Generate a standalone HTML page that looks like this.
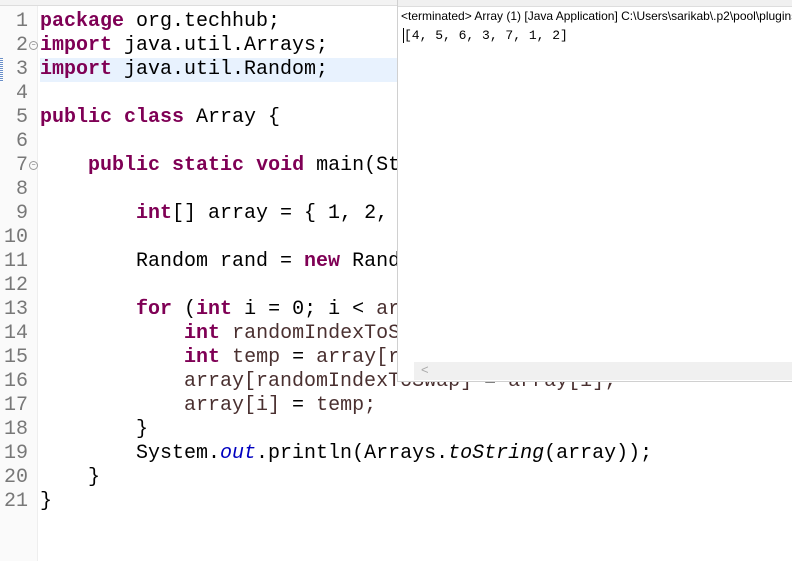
<!DOCTYPE html>
<html><head><meta charset="utf-8"><style>
body{margin:0;width:792px;height:561px;overflow:hidden;background:#fff;position:relative;font-family:"Liberation Mono",monospace}
.tabs{position:absolute;left:0;top:0;width:792px;height:5px;background:#f3f3f3;border-bottom:1px solid #ddd}
.gut{position:absolute;left:0;top:6px;width:37px;height:555px;background:#fafafa;border-right:1px solid #eee}
.hl{position:absolute;left:40px;top:58px;width:360px;height:24px;background:#e8f2fe}
.mk{position:absolute;left:0;top:58px;width:3px;height:24px;background:repeating-linear-gradient(#6a8fc8 0 1px,#fff 1px 2px)}
.ln{position:absolute;left:0;width:28px;text-align:right;color:#787878;font-size:20px;line-height:24px}
.cd{position:absolute;left:40px;width:752px;overflow:hidden;white-space:pre;font-size:20px;line-height:24px;color:#000}
.k{color:#7f0055;font-weight:bold}
.v{color:#4a3030}
.f{color:#0000c0;font-style:italic}
.i{font-style:italic}
.fold{position:absolute;left:29px;width:7px;height:7px;border:1px solid #999;border-radius:50%;font-size:7px;line-height:7px;text-align:center;color:#666;font-family:"Liberation Sans",sans-serif}
.con{position:absolute;left:397px;top:0;width:395px;height:381px;overflow:hidden;background:#fff;border-left:1px solid #d0d0d0;border-bottom:1px solid #d0d0d0}
.ctab{position:absolute;left:0;top:0;width:395px;height:6px;background:#f0f0f0;border-bottom:1px solid #ddd}
.chd{position:absolute;left:3px;top:9px;font-family:"Liberation Sans",sans-serif;font-size:12px;white-space:nowrap;color:#000}
.out{position:absolute;left:6px;top:28px;font-size:13px;white-space:pre;color:#000}
.cur{position:absolute;left:5px;top:28px;width:1px;height:15px;background:#000}
.sb{position:absolute;left:16px;top:362px;width:379px;height:18px;background:#f0f0f0}
.sb span{position:absolute;left:7px;top:0;font-size:13px;color:#aaa;font-family:"Liberation Sans",sans-serif}
</style></head><body>
<div class="tabs"></div>
<div class="gut"></div>
<div class="hl"></div>
<div class="mk"></div>
<div class="ln" style="top:10px">1</div>
<div class="ln" style="top:34px">2</div>
<div class="ln" style="top:58px">3</div>
<div class="ln" style="top:82px">4</div>
<div class="ln" style="top:106px">5</div>
<div class="ln" style="top:130px">6</div>
<div class="ln" style="top:154px">7</div>
<div class="ln" style="top:178px">8</div>
<div class="ln" style="top:202px">9</div>
<div class="ln" style="top:226px">10</div>
<div class="ln" style="top:250px">11</div>
<div class="ln" style="top:274px">12</div>
<div class="ln" style="top:298px">13</div>
<div class="ln" style="top:322px">14</div>
<div class="ln" style="top:346px">15</div>
<div class="ln" style="top:370px">16</div>
<div class="ln" style="top:394px">17</div>
<div class="ln" style="top:418px">18</div>
<div class="ln" style="top:442px">19</div>
<div class="ln" style="top:466px">20</div>
<div class="ln" style="top:490px">21</div>
<div class="fold" style="top:41px">−</div>
<div class="fold" style="top:161px">−</div>
<div class="cd" style="top:10px"><span class="k">package</span> org.techhub;
<span class="k">import</span> java.util.Arrays;
<span class="k">import</span> java.util.Random;

<span class="k">public</span> <span class="k">class</span> Array {

    <span class="k">public</span> <span class="k">static</span> <span class="k">void</span> main(String[] args) {

        <span class="k">int</span>[] array = { 1, 2, 3, 4, 5, 6, 7 };

        Random rand = <span class="k">new</span> Random();

        <span class="k">for</span> (<span class="k">int</span> i = 0; i &lt; <span class="v">array</span>.length; i++) {
            <span class="k">int</span> <span class="v">randomIndexToSwap</span> = rand.nextInt(array.length);
            <span class="k">int</span> <span class="v">temp</span> = <span class="v">array[randomIndexToSwap];</span>
            <span class="v">array[randomIndexToSwap]</span> = <span class="v">array[i];</span>
            <span class="v">array[i]</span> = <span class="v">temp;</span>
        }
        System.<span class="f">out</span>.println(Arrays.<span class="i">toString</span>(array));
    }
}</div>
<div class="con">
<div class="ctab"></div>
<div class="chd">&lt;terminated&gt; Array (1) [Java Application] C:\Users\sarikab\.p2\pool\plugins\org.eclipse</div>
<div class="cur"></div>
<div class="out">[4, 5, 6, 3, 7, 1, 2]</div>
<div class="sb"><span>&lt;</span></div>
</div>
</body></html>
